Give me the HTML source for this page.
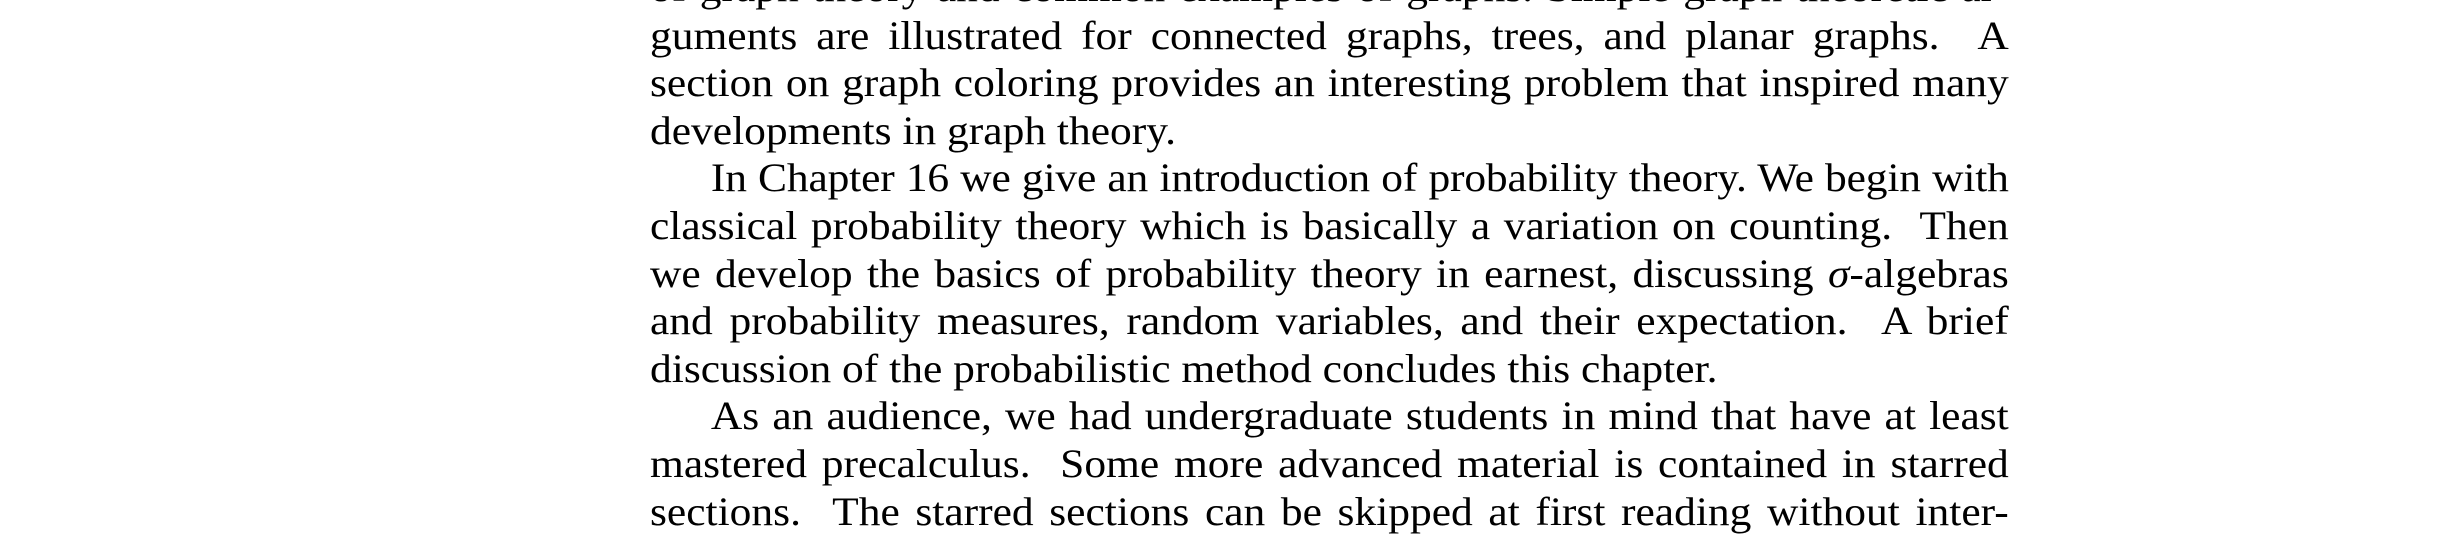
<!DOCTYPE html>
<html><head><meta charset="utf-8"><style>
html,body{margin:0;padding:0;background:#fff;width:2448px;height:528px;overflow:hidden}
#t{position:absolute;left:650px;top:-36px;width:1250px;transform:scaleX(1.087);transform-origin:0 0;font-family:"Liberation Serif",serif;font-size:40px;line-height:47.6px;color:#000}
.l{height:47.6px;white-space:nowrap;text-align:justify;text-align-last:justify}
.e{text-align-last:left}
.i{padding-left:56px}
.tight{letter-spacing:-0.15px;word-spacing:-2px}
</style></head><body><div id="t">
<div class="l">of graph theory and common examples of graphs. Simple graph theoretic ar-</div>
<div class="l">guments are illustrated for connected graphs, trees, and planar graphs. &nbsp;A</div>
<div class="l">section on graph coloring provides an interesting problem that inspired many</div>
<div class="l e">developments in graph theory.</div>
<div class="l i tight">In Chapter 16 we give an introduction of probability theory. We begin with</div>
<div class="l">classical probability theory which is basically a variation on counting. &nbsp;Then</div>
<div class="l">we develop the basics of probability theory in earnest, discussing <i>σ</i>-algebras</div>
<div class="l">and probability measures, random variables, and their expectation. &nbsp;A brief</div>
<div class="l e">discussion of the probabilistic method concludes this chapter.</div>
<div class="l i">As an audience, we had undergraduate students in mind that have at least</div>
<div class="l">mastered precalculus. &nbsp;Some more advanced material is contained in starred</div>
<div class="l">sections. &nbsp;The starred sections can be skipped at first reading without inter-</div>
</div></body></html>
